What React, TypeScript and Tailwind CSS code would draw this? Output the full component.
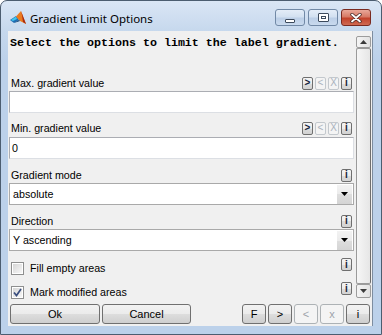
import React from "react";

const SANS = { fontFamily: '"Liberation Sans", Arial, sans-serif' };

function SmallBtn({ label, enabled }: { label: string; enabled: boolean }) {
  return (
    <div
      className={
        enabled
          ? "w-[11px] h-[13px] rounded-[2px] border border-[#6f6f6f] bg-[linear-gradient(#f4f4f4_0%,#ececec_50%,#dcdcdc_50%,#d2d2d2_100%)] flex items-center justify-center text-[10px] font-bold leading-none text-[#14233c]"
          : "w-[11px] h-[13px] rounded-[2px] border border-[#c3c8cd] bg-[#f4f4f4] flex items-center justify-center text-[10px] leading-none text-[#aab2bd]"
      }
      style={SANS}
    >
      {label}
    </div>
  );
}

function BigBtn({ label, enabled, w }: { label: string; enabled: boolean; w: string }) {
  return (
    <div
      className={
        (enabled
          ? "rounded-[3px] border border-[#707070] bg-[linear-gradient(#f2f2f2_0%,#ebebeb_50%,#dddddd_50%,#cfcfcf_100%)] text-black"
          : "rounded-[3px] border border-[#adb2b5] bg-[#f4f4f4] text-[#9da3aa]") +
        " h-[20px] flex items-center justify-center text-[11px] leading-none " +
        w
      }
      style={SANS}
    >
      {label}
    </div>
  );
}

function LabelRow({ text, buttons }: { text: string; buttons: "all" | "info" }) {
  return (
    <div className="h-[14px] shrink-0 flex items-center justify-between pl-[3px] pr-[4px]">
      <span className="text-[10.7px] leading-none text-black" style={SANS}>
        {text}
      </span>
      <div className="flex gap-[2px]">
        {buttons === "all" && (
          <>
            <SmallBtn label=">" enabled />
            <SmallBtn label="<" enabled={false} />
            <SmallBtn label="X" enabled={false} />
          </>
        )}
        <SmallBtn label="i" enabled />
      </div>
    </div>
  );
}

function Input({ value }: { value?: string }) {
  return (
    <div className="ml-[1px] w-[345px] h-[22px] shrink-0 border border-[#abadb3] border-b-[#dcdfe4] border-r-[#dcdfe4] bg-white flex items-center pl-[2px]">
      <span className="text-[10.7px] leading-none text-black" style={SANS}>
        {value}
      </span>
    </div>
  );
}

function Select({ value }: { value: string }) {
  return (
    <div className="ml-[1px] w-[345px] h-[22px] shrink-0 border border-[#a9a9a9] bg-white flex items-center justify-between pl-[3px] pr-[1px]">
      <span className="text-[10.7px] leading-none text-black" style={SANS}>
        {value}
      </span>
      <div className="w-[15px] h-[19px] bg-[linear-gradient(#f3f3f3_0%,#ebebeb_50%,#dedede_50%,#d4d4d4_100%)] flex items-center justify-center">
        <svg width="7" height="4" viewBox="0 0 7 4">
          <polygon points="0,0 7,0 3.5,4" fill="#000" />
        </svg>
      </div>
    </div>
  );
}

function CheckRow({ text, checked }: { text: string; checked: boolean }) {
  return (
    <div className="h-[20px] shrink-0 flex items-start justify-between pl-[3px] pr-[4px]">
      <div className="flex items-center gap-[6px] mt-[4px]">
        <div className="w-[13px] h-[13px] border border-[#8e8f8f] bg-white p-[1px]">
          <div className="w-full h-full bg-[linear-gradient(135deg,#d6d6d6,#f7f7f7)] flex items-center justify-center">
            {checked && (
              <svg width="9" height="9" viewBox="0 0 9 9">
                <path d="M1 4.5 L3.5 7.5 L8 1" stroke="#3a4e7e" strokeWidth="1.7" fill="none" />
              </svg>
            )}
          </div>
        </div>
        <span className="text-[10.7px] leading-none text-black" style={SANS}>
          {text}
        </span>
      </div>
      <SmallBtn label="i" enabled />
    </div>
  );
}

function MatlabIcon() {
  return (
    <svg width="16" height="16" viewBox="0 0 16 16">
      <polygon points="0,10 6,6 9,10 4,13" fill="#1f6db3" />
      <polygon points="1,10 6,6.5 7,9 3,11" fill="#3fc7ee" />
      <polygon points="6,6.5 11,1 16,14 10,11" fill="#ea7a1f" />
      <polygon points="11,1 16,14 13,12 12,5" fill="#a92a10" />
      <polygon points="9,10 10,11 4,13" fill="#0d3f6e" />
    </svg>
  );
}

function CaptionBtn({ kind }: { kind: "min" | "max" | "close" }) {
  const base = "w-[30px] h-[17px] rounded-[3px] border flex items-center justify-center";
  if (kind === "close") {
    return (
      <div className={base + " border-[#7a2a20] bg-[linear-gradient(#e9a899_0%,#d77a66_45%,#c2422b_55%,#cf6a52_100%)]"}>
        <svg width="12" height="10" viewBox="0 0 12 10">
          <path d="M2 1.5 L10 8.5 M10 1.5 L2 8.5" stroke="#4a2a26" strokeWidth="3.4" strokeLinecap="round" />
          <path d="M2 1.5 L10 8.5 M10 1.5 L2 8.5" stroke="#ffffff" strokeWidth="1.8" strokeLinecap="round" />
        </svg>
      </div>
    );
  }
  return (
    <div className={base + " border-[#7189a6] bg-[linear-gradient(#e4edf8_0%,#d3e1f1_45%,#bccfe7_55%,#c9daee_100%)]"}>
      {kind === "min" ? (
        <div className="mt-[7px] w-[10px] h-[4px] rounded-[1px] border border-[#3c4a5c] bg-white" />
      ) : (
        <div className="w-[11px] h-[9px] rounded-[1px] border border-[#3c4a5c] bg-white p-[2px]">
          <div className="w-full h-full border border-[#3c4a5c]" />
        </div>
      )}
    </div>
  );
}

export default function App() {
  return (
    <div className="w-[382px] h-[335px] rounded-t-[7px] border border-[#4c5d70] bg-[linear-gradient(#dae6f5_0px,#c6d8ed_30px,#bcd1ea_60px,#bcd1ea_100%)] flex flex-col">
      {/* Title bar */}
      <div className="h-[30px] shrink-0 flex items-start">
        <div className="ml-[9px] mt-[9px]">
          <MatlabIcon />
        </div>
        <span
          className="ml-[4px] mt-[10px] text-[11.5px] leading-[16px] text-black"
          style={{ fontFamily: '"Noto Sans", "Open Sans", sans-serif' }}
        >
          Gradient Limit Options
        </span>
        <div className="ml-auto mr-[10px] mt-[8px] flex gap-[3px]">
          <CaptionBtn kind="min" />
          <CaptionBtn kind="max" />
          <CaptionBtn kind="close" />
        </div>
      </div>

      {/* Client area */}
      <div className="ml-[7px] mr-[8px] h-[295px] shrink-0 bg-[#f0f0f0] border-r border-[#7d8da0] flex flex-col">
        {/* Scroll panel */}
        <div className="mt-[5px] h-[263px] shrink-0 flex">
          <div className="w-[348px] overflow-hidden flex flex-col">
            <div className="h-[16px] shrink-0 pl-[2px] flex items-center">
              <span
                className="text-[11.67px] leading-none font-bold text-black whitespace-pre"
                style={{ fontFamily: '"Liberation Mono", "Courier New", monospace' }}
              >
                Select the options to limit the label gradient.
              </span>
            </div>
            <div className="mt-[24px] shrink-0">
              <LabelRow text="Max. gradient value" buttons="all" />
            </div>
            <div className="mt-[1px] shrink-0">
              <Input />
            </div>
            <div className="mt-[8px] shrink-0">
              <LabelRow text="Min. gradient value" buttons="all" />
            </div>
            <div className="mt-[2px] shrink-0">
              <Input value="0" />
            </div>
            <div className="mt-[9px] shrink-0">
              <LabelRow text="Gradient mode" buttons="info" />
            </div>
            <div className="mt-[1px] shrink-0">
              <Select value="absolute" />
            </div>
            <div className="mt-[9px] shrink-0">
              <LabelRow text="Direction" buttons="info" />
            </div>
            <div className="mt-[1px] shrink-0">
              <Select value="Y ascending" />
            </div>
            <div className="mt-[7px] shrink-0">
              <CheckRow text="Fill empty areas" checked={false} />
            </div>
            <div className="mt-[4px] shrink-0">
              <CheckRow text="Mark modified areas" checked />
            </div>
          </div>
          {/* Scrollbar */}
          <div className="w-[15px] flex flex-col">
            <div className="h-[12px] shrink-0 rounded-[2px] border border-[#9c9c9c] bg-[linear-gradient(90deg,#f4f4f4,#e2e2e2)] flex items-center justify-center">
              <svg width="7" height="4" viewBox="0 0 7 4">
                <polygon points="0,4 7,4 3.5,0" fill="#3b3b3b" />
              </svg>
            </div>
            <div className="flex-1 rounded-[2px] border border-[#9a9a9a] border-r-[#6e6e6e] bg-[linear-gradient(90deg,#f6f6f6,#e6e6e6)]" />
            <div className="h-[14px] shrink-0 mb-[1px] rounded-[2px] border border-[#9c9c9c] bg-[linear-gradient(90deg,#f4f4f4,#e2e2e2)] flex items-center justify-center">
              <svg width="7" height="4" viewBox="0 0 7 4">
                <polygon points="0,0 7,0 3.5,4" fill="#3b3b3b" />
              </svg>
            </div>
          </div>
        </div>

        {/* Bottom buttons */}
        <div className="mt-[5px] h-[20px] shrink-0 flex items-center pl-[2px] pr-[2px]">
          <BigBtn label="Ok" enabled w="w-[90px]" />
          <div className="ml-[2px]">
            <BigBtn label="Cancel" enabled w="w-[89px]" />
          </div>
          <div className="ml-auto flex gap-[2px]">
            <BigBtn label="F" enabled w="w-[24px]" />
            <BigBtn label=">" enabled w="w-[24px]" />
            <BigBtn label="<" enabled={false} w="w-[24px]" />
            <BigBtn label="x" enabled={false} w="w-[24px]" />
            <BigBtn label="i" enabled w="w-[24px]" />
          </div>
        </div>
      </div>
    </div>
  );
}
